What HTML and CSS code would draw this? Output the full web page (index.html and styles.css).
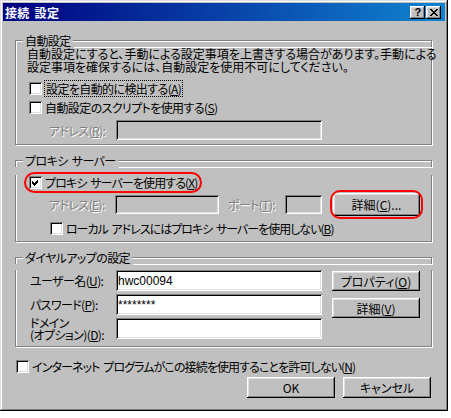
FILE: index.html
```html
<!DOCTYPE html>
<html lang="ja">
<head>
  <meta charset="UTF-8" />
  <title>接続 設定</title>
  <link rel="stylesheet" href="styles.css">
</head>
<body>
  <div class="window">
    <div class="titlebar">
      <span class="title">接続 設定</span>
      <div class="caption-buttons">
        <span class="caption-btn help">?</span>
        <span class="caption-btn close">
          <svg width="8" height="7" viewBox="0 0 8 7" shape-rendering="crispEdges">
            <path d="M0 0h2v1h-2zM6 0h2v1h-2zM1 1h2v1h-2zM5 1h2v1h-2zM2 2h4v1h-4zM3 3h2v1h-2zM2 4h4v1h-4zM1 5h2v1h-2zM5 5h2v1h-2zM0 6h2v1h-2zM6 6h2v1h-2z" fill="#000"/>
          </svg>
        </span>
      </div>
    </div>

    <div class="dialog">
      <section class="group group-auto">
        <div class="group-head"><span class="group-title">自動設定</span></div>
        <div class="group-body">
          <p class="note">自動設定にすると、手動による設定事項を上書きする場合があります。手動による<br>設定事項を確保するには、自動設定を使用不可にしてください。</p>
          <label class="check-row row-detect">
            <span class="check"></span>
            <span class="focus">設定を自動的に検出する(<u>A</u>)</span>
          </label>
          <label class="check-row row-script">
            <span class="check"></span>
            <span>自動設定のスクリプトを使用する(<u>S</u>)</span>
          </label>
          <div class="field-row row-auto-address">
            <span class="field-label disabled label-auto">アドレス(<u>R</u>):</span>
            <input class="textbox tb-auto" type="text" disabled>
          </div>
        </div>
      </section>

      <section class="group group-proxy">
        <div class="group-head"><span class="group-title">プロキシ サーバー</span></div>
        <div class="group-body">
          <label class="check-row row-proxy marked">
            <span class="check checked">
              <svg width="13" height="13" viewBox="0 0 13 13" shape-rendering="crispEdges">
                <polygon points="3,5 5,7 9,3 9,6 5,10 3,8" fill="#000"/>
              </svg>
            </span>
            <span>プロキシ サーバーを使用する(<u>X</u>)</span>
          </label>
          <div class="field-row row-proxy-address">
            <span class="field-label disabled label-proxy">アドレス(<u>E</u>):</span>
            <input class="textbox tb-proxy" type="text" disabled>
            <span class="field-label disabled label-port">ポート(<u>T</u>):</span>
            <input class="textbox tb-port" type="text" disabled>
            <span class="marked-btn"><button class="btn btn-detail">詳細(<u>C</u>)...</button></span>
          </div>
          <label class="check-row row-local">
            <span class="check"></span>
            <span>ローカル アドレスにはプロキシ サーバーを使用しない(<u>B</u>)</span>
          </label>
        </div>
      </section>

      <section class="group group-dialup">
        <div class="group-head"><span class="group-title">ダイヤルアップの設定</span></div>
        <div class="group-body">
          <div class="dialup">
            <div class="dialup-fields">
              <span class="field-label">ユーザー名(<u>U</u>):</span>
              <input class="textbox tb-wide" type="text" value="hwc00094">
              <span class="field-label">パスワード(<u>P</u>):</span>
              <input class="textbox tb-wide" type="text" value="********">
              <span class="field-label two-line">ドメイン<br>(オプション)(<u>D</u>):</span>
              <input class="textbox tb-wide" type="text">
            </div>
            <div class="dialup-buttons">
              <button class="btn">プロパティ(<u>O</u>)</button>
              <button class="btn">詳細(<u>V</u>)</button>
            </div>
          </div>
        </div>
      </section>

      <label class="check-row row-deny">
        <span class="check"></span>
        <span>インターネット プログラムがこの接続を使用することを許可しない(<u>N</u>)</span>
      </label>

      <div class="actions">
        <button class="btn btn-action">OK</button>
        <button class="btn btn-action">キャンセル</button>
      </div>
    </div>
  </div>
</body>
</html>
```

FILE: styles.css
```css
* {
  box-sizing: border-box;
}

html, body {
  margin: 0;
  background: #fff;
}

body {
  font: 12px/13px "Noto Sans CJK JP", sans-serif;
  font-feature-settings: "palt";
  letter-spacing: -0.6px;
  word-spacing: 2px;
  color: #000;
}

u {
  text-decoration: underline;
  text-underline-offset: 1px;
}

/* window frame */
.window {
  width: 448px;
  height: 411px;
  padding: 3px;
  background: #c0c0c0;
  box-shadow:
    inset -1px -1px #000,
    inset 1px 1px #dfdfdf,
    inset -2px -2px #808080,
    inset 2px 2px #fff;
}

.titlebar {
  height: 18px;
  display: flex;
  align-items: center;
  justify-content: space-between;
  padding: 0 4px 0 2px;
  background: linear-gradient(to right, #000080, #1084d0);
}

.title {
  color: #fff;
  font-weight: bold;
  letter-spacing: 0.3px;
}

.caption-buttons {
  display: flex;
  gap: 1px;
}

.caption-btn {
  width: 15px;
  height: 13px;
  display: flex;
  align-items: center;
  justify-content: center;
  background: #c0c0c0;
  font: bold 11px/11px "Liberation Sans", sans-serif;
  box-shadow:
    inset -1px -1px #000,
    inset 1px 1px #fff,
    inset -2px -2px #808080,
    inset 2px 2px #dfdfdf;
}

.dialog {
  padding: 13px 0 0 12px;
}

/* group boxes: etched line, grey then white */
.group {
  width: 417px;
}

.group-head {
  display: flex;
  height: 13px;
}

.group-head::before,
.group-head::after {
  content: "";
  margin-top: 6px;
  border-top: 1px solid #808080;
}

.group-head::before {
  width: 7px;
  border-left: 1px solid #808080;
  box-shadow: inset 1px 1px #fff;
}

.group-head::after {
  flex: 1;
  border-right: 1px solid #808080;
  box-shadow: inset 0 1px #fff, 1px 1px #fff;
}

.group-title {
  padding: 0 2px;
  white-space: nowrap;
}

.group-body {
  border: 1px solid #808080;
  border-top: none;
  box-shadow: inset 1px 0 #fff, 1px 1px #fff;
}

.group-auto .group-body {
  padding-bottom: 4px;
}

.group-proxy {
  margin-top: 9px;
}

.group-proxy .group-body {
  padding-bottom: 5px;
}

.group-dialup {
  margin-top: 9px;
}

.group-dialup .group-body {
  padding-bottom: 7px;
}

.note {
  margin: 0;
  padding-left: 11px;
  letter-spacing: 0;
  white-space: nowrap;
}

/* checkboxes */
.check-row {
  display: flex;
  align-items: center;
  gap: 3px;
  height: 15px;
  white-space: nowrap;
}

.check {
  width: 13px;
  height: 13px;
  flex: none;
  background: #fff;
  box-shadow:
    inset 1px 1px #808080,
    inset -1px -1px #fff,
    inset 2px 2px #000,
    inset -2px -2px #dfdfdf;
}

.check svg {
  display: block;
}

.focus {
  padding: 0 1px;
  line-height: 15px;
  outline: 1px dotted #000;
}

.row-detect {
  margin: 8px 0 0 13px;
  width: max-content;
}

.row-script {
  margin: 4px 0 0 13px;
}

.row-proxy {
  margin: 8px 0 0 11px;
  padding: 0 2px;
  width: max-content;
  letter-spacing: -0.9px;
}

.row-local {
  margin: 5px 0 0 34px;
  letter-spacing: -1px;
}

.row-deny {
  margin: 12px 0 0 1px;
  letter-spacing: -0.9px;
}

.marked {
  outline: 2px solid #f00;
  outline-offset: 1px;
  border-radius: 9px;
}

/* fields */
.field-row {
  display: flex;
  align-items: center;
}

.field-label {
  white-space: nowrap;
}

.disabled {
  color: #808080;
  text-shadow: 1px 1px #fff;
}

.textbox {
  display: block;
  margin: 0;
  padding: 0 2px;
  border: none;
  font: inherit;
  font-family: "Liberation Sans", sans-serif;
  letter-spacing: 0;
  background: #fff;
  box-shadow:
    inset 1px 1px #808080,
    inset -1px -1px #fff,
    inset 2px 2px #000,
    inset -2px -2px #dfdfdf;
}

.textbox:disabled {
  background: #c0c0c0;
}

.row-auto-address {
  margin: 5px 0 0 33px;
}

.label-auto {
  width: 67px;
}

.tb-auto {
  width: 206px;
  height: 20px;
}

.row-proxy-address {
  margin: 3px 0 0 33px;
}

.label-proxy {
  width: 66px;
}

.tb-proxy {
  width: 104px;
  height: 19px;
}

.label-port {
  width: 57px;
  margin-left: 9px;
}

.tb-port {
  width: 37px;
  height: 19px;
}

.marked-btn {
  display: flex;
  margin-left: 11px;
  border-radius: 7px;
  outline: 2px solid #f00;
  outline-offset: 1px;
}

/* buttons */
.btn {
  margin: 0;
  padding: 0;
  border: none;
  width: 88px;
  height: 20px;
  font: inherit;
  color: #000;
  background: #c0c0c0;
  box-shadow:
    inset -1px -1px #000,
    inset 1px 1px #fff,
    inset -2px -2px #808080,
    inset 2px 2px #dfdfdf;
}

.btn-detail {
  width: 87px;
  height: 23px;
}

/* dial-up */
.dialup {
  display: flex;
  margin: 6px 0 0 14px;
  gap: 10px;
}

.dialup-fields {
  display: grid;
  grid-template-columns: 86px 206px;
  grid-auto-rows: 21px;
  row-gap: 3px;
  align-items: center;
}

.two-line {
  line-height: 12px;
}

.tb-wide {
  width: 206px;
  height: 21px;
}

.dialup-buttons {
  display: flex;
  flex-direction: column;
  gap: 7px;
  padding-top: 1px;
}

/* bottom buttons */
.actions {
  display: flex;
  justify-content: flex-end;
  gap: 8px;
  margin-top: 3px;
  padding-right: 14px;
}

.btn-action {
  height: 21px;
}
```
